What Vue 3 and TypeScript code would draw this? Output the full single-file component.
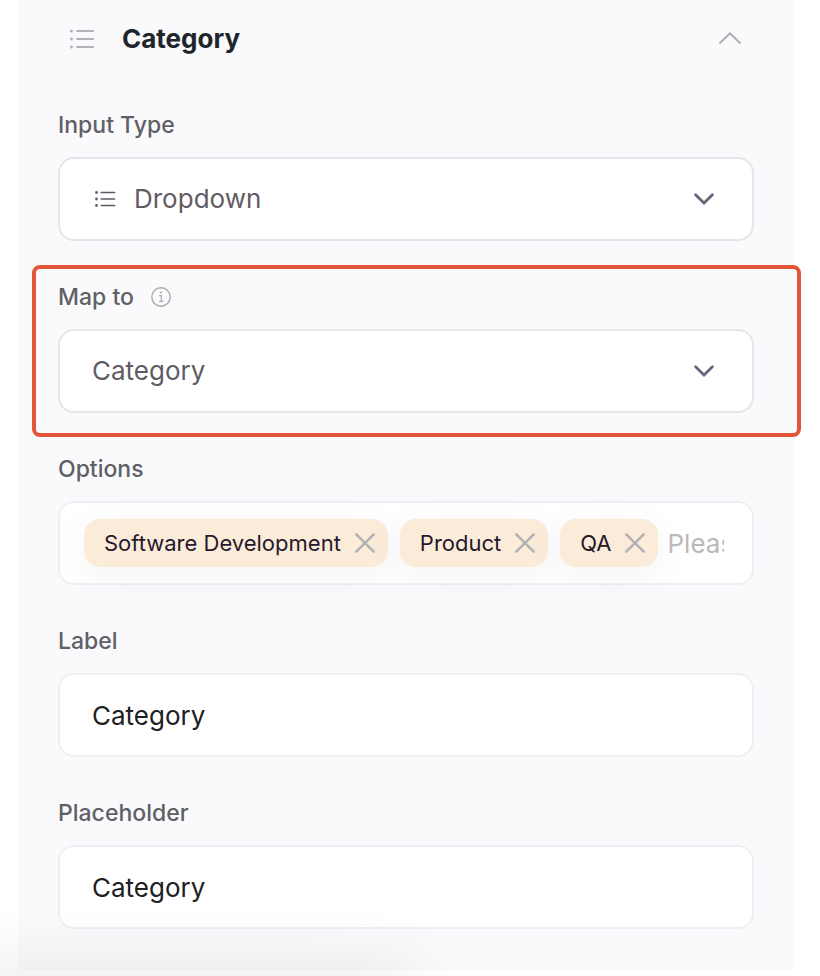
<script setup lang="ts">
import { ref } from 'vue'

const open = ref(true)
const inputType = ref('Dropdown')
const mapTo = ref('Category')
const options = ref<string[]>(['Software Development', 'Product', 'QA'])
const newOption = ref('')
const label = ref('Category')
const placeholder = ref('Category')

function removeOption(index: number) {
  options.value.splice(index, 1)
}

function addOption() {
  const value = newOption.value.trim()
  if (value) options.value.push(value)
  newOption.value = ''
}
</script>

<template>
  <main class="page">
    <section class="panel">
      <header class="header">
        <svg class="header-icon" width="26" height="22" viewBox="0 0 26 22" aria-hidden="true">
          <g fill="#b0b0b7">
            <circle cx="2.5" cy="3" r="1.5" />
            <circle cx="2.5" cy="11" r="1.5" />
            <circle cx="2.5" cy="19" r="1.5" />
          </g>
          <path d="M8 3H24M8 11H24M8 19H24" stroke="#b0b0b7" stroke-width="1.9" stroke-linecap="round" />
        </svg>
        <h2 class="title">Category</h2>
        <button class="icon-button" type="button" aria-label="Toggle section" :aria-expanded="open" @click="open = !open">
          <svg width="24" height="14" viewBox="0 0 24 14" aria-hidden="true">
            <path d="M1.5 11.5L12 1.3L22.5 11.5" fill="none" stroke="#b0b0b5" stroke-width="2.1" />
          </svg>
        </button>
      </header>

      <div v-if="open" class="fields">
        <div class="field">
          <div class="label-row"><label for="input-type">Input Type</label></div>
          <div class="select-wrap">
            <select id="input-type" v-model="inputType" class="control select with-icon">
              <option>Dropdown</option>
            </select>
            <svg class="lead" width="24" height="18" viewBox="0 0 24 18" aria-hidden="true">
              <g fill="#605a64">
                <circle cx="2.5" cy="2.5" r="1.4" />
                <circle cx="2.5" cy="9" r="1.4" />
                <circle cx="2.5" cy="15.5" r="1.4" />
              </g>
              <path d="M7.3 2.5H20.5M7.3 9H20.5M7.3 15.5H20.5" stroke="#605a64" stroke-width="1.7" stroke-linecap="round" />
            </svg>
            <svg class="caret" width="20" height="12" viewBox="0 0 20 12" aria-hidden="true">
              <path d="M1.6 1.8L10 10L18.4 1.8" fill="none" stroke="#60677c" stroke-width="2.7" stroke-linecap="round" />
            </svg>
          </div>
        </div>

        <div class="field highlighted">
          <div class="label-row">
            <label for="map-to">Map to</label>
            <svg width="20" height="20" viewBox="0 0 20 20" aria-hidden="true">
              <circle cx="10" cy="10" r="9.2" fill="none" stroke="#aaaaae" stroke-width="1.4" />
              <circle cx="10" cy="5.6" r="1" fill="#aaaaae" />
              <path d="M8.2 8.6H10.3V14.2M8 14.4H12.3" fill="none" stroke="#aaaaae" stroke-width="1.2" />
            </svg>
          </div>
          <div class="select-wrap">
            <select id="map-to" v-model="mapTo" class="control select">
              <option>Category</option>
            </select>
            <svg class="caret" width="20" height="12" viewBox="0 0 20 12" aria-hidden="true">
              <path d="M1.6 1.8L10 10L18.4 1.8" fill="none" stroke="#60677c" stroke-width="2.7" stroke-linecap="round" />
            </svg>
          </div>
        </div>

        <div class="field">
          <div class="label-row"><label for="options">Options</label></div>
          <div class="control tags">
            <div class="chips">
              <span v-for="(option, index) in options" :key="option" class="chip">
                {{ option }}
                <button class="icon-button" type="button" :aria-label="`Remove ${option}`" @click="removeOption(index)">
                  <svg width="22" height="22" viewBox="0 0 22 22" aria-hidden="true">
                    <path d="M2.3 2.3L19.7 19.7M19.7 2.3L2.3 19.7" fill="none" stroke="#b0b0b5" stroke-width="2.5" stroke-linecap="round" />
                  </svg>
                </button>
              </span>
            </div>
            <input id="options" v-model="newOption" class="tag-input" type="text" placeholder="Please enter" @keydown.enter.prevent="addOption" />
          </div>
        </div>

        <div class="field">
          <div class="label-row"><label for="label">Label</label></div>
          <input id="label" v-model="label" class="control text" type="text" />
        </div>

        <div class="field">
          <div class="label-row"><label for="placeholder">Placeholder</label></div>
          <input id="placeholder" v-model="placeholder" class="control text" type="text" />
        </div>
      </div>
    </section>
    <div class="bottom-shade" aria-hidden="true"></div>
  </main>
</template>

<style>
body {
  background: #fff;
}
</style>

<style scoped>
* {
  box-sizing: border-box;
}

.page {
  position: relative;
  overflow: hidden;
  min-height: 100vh;
  padding: 0 26px 0 18px;
  font-family: Inter, "Liberation Sans", sans-serif;
}

.panel {
  margin-top: -8px;
  padding: 31px 40px 41px;
  border-radius: 16px 16px 0 0;
  background: #fafafc;
}

.header {
  display: flex;
  align-items: center;
  height: 32px;
  margin-bottom: 56px;
  padding: 0 12px 0 11px;
}

.header-icon {
  flex: none;
  margin-right: 27px;
}

.title {
  flex: 1;
  margin: 0;
  color: #20252b;
  font-size: 26px;
  font-weight: 700;
  line-height: 32px;
}

.icon-button {
  display: flex;
  flex: none;
  padding: 0;
  border: 0;
  background: none;
  cursor: pointer;
}

.fields {
  display: flex;
  flex-direction: column;
  gap: 42px;
}

.field {
  position: relative;
  display: flex;
  flex-direction: column;
  gap: 18px;
}

.highlighted::after {
  content: "";
  position: absolute;
  inset: -18px -47px -24px -26px;
  border: 4px solid #e25536;
  border-radius: 8px;
  pointer-events: none;
}

.label-row {
  display: flex;
  align-items: center;
  gap: 17px;
  height: 28px;
  color: #5f6066;
  font-size: 23px;
  font-weight: 500;
  line-height: 28px;
}

.control {
  width: 100%;
  height: 84px;
  margin: 0;
  border: 2px solid #efeff3;
  border-radius: 16px;
  background: #fff;
  font-family: inherit;
  font-size: 26px;
  font-weight: 400;
  outline: none;
}

.text {
  padding: 0 32px;
  color: #202022;
}

.select-wrap {
  display: grid;
  align-items: center;
}

.select-wrap > * {
  grid-area: 1 / 1;
}

.select {
  appearance: none;
  padding: 0 72px 2px 32px;
  border-color: #e5e5ea;
  color: #625b64;
}

.with-icon {
  padding-left: 74px;
}

.lead {
  margin-left: 36px;
  pointer-events: none;
}

.caret {
  justify-self: end;
  margin-right: 40px;
  pointer-events: none;
}

.tags {
  display: flex;
  align-items: center;
  gap: 9px;
  padding: 0 28px 0 24px;
}

.chips {
  display: flex;
  flex: none;
  gap: 12px;
}

.chip {
  display: flex;
  flex: none;
  align-items: center;
  gap: 13px;
  height: 48px;
  padding: 0 12px 0 20px;
  border-radius: 16px;
  background: #faecd9;
  box-shadow: 0 8px 40px rgba(30, 30, 50, 0.05);
  color: #27182c;
  font-size: 22px;
  white-space: nowrap;
}

.tag-input {
  position: relative;
  flex: 1;
  width: 0;
  min-width: 0;
  padding: 0;
  border: 0;
  background: none;
  color: #202022;
  font-family: inherit;
  font-size: 26px;
  outline: none;
}

.tag-input::placeholder {
  color: #b9b9b9;
  opacity: 1;
}

.bottom-shade {
  position: absolute;
  top: 100%;
  left: -80px;
  width: 61%;
  height: 40px;
  border-radius: 20px;
  box-shadow: 0 0 72px rgba(0, 0, 0, 0.12);
  pointer-events: none;
}
</style>
